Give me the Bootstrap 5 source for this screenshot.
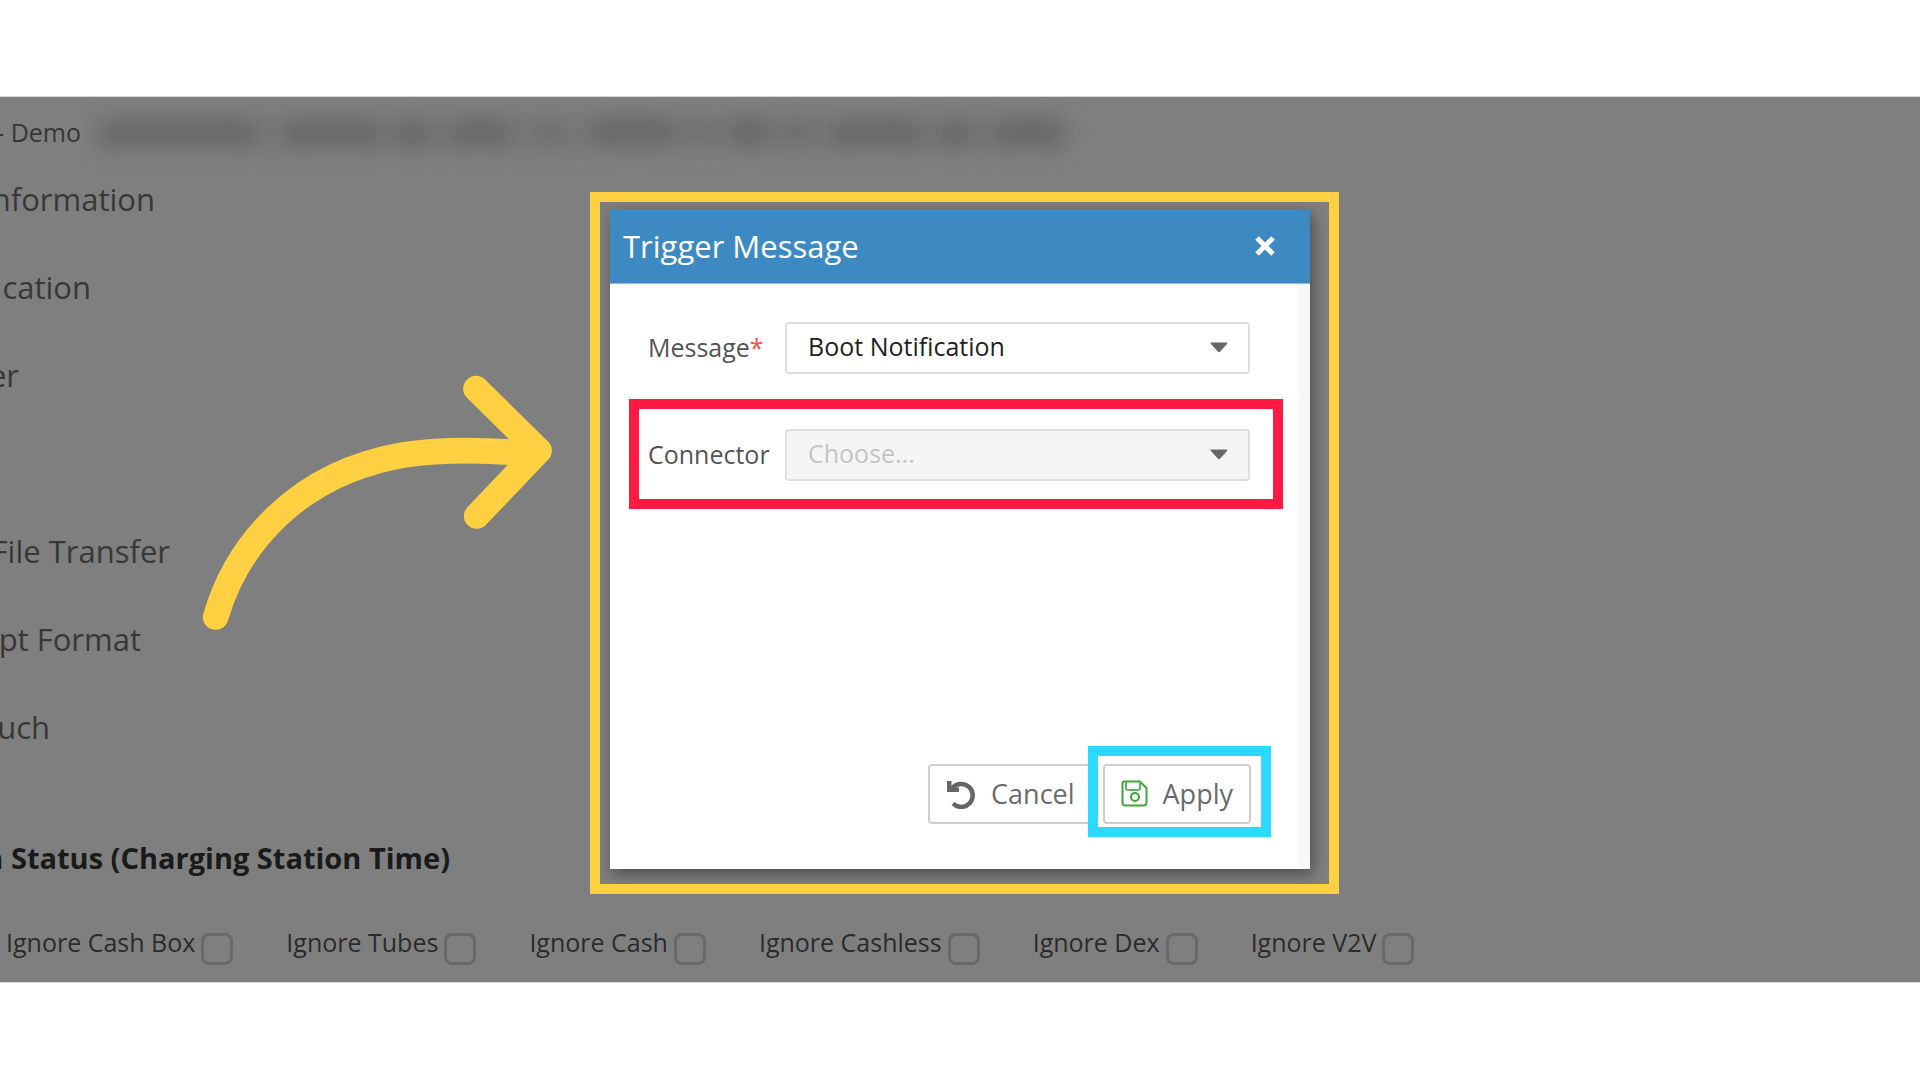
<!DOCTYPE html>
<html lang="en">
<head>
<meta charset="utf-8">
<meta name="viewport" content="width=device-width, initial-scale=1">
<title>Trigger Message</title>
<link href="https://cdn.jsdelivr.net/npm/bootstrap@5.3.0/dist/css/bootstrap.min.css" rel="stylesheet">
<style>
  body { font-family: "Open Sans", "Noto Sans", sans-serif; font-size: 25px; background: #fff; color: #333; }
  .stage { margin: 97px 0; background: #7f7f7f; box-shadow: 0 0 0 1px #d4d4d4; padding-bottom: 17px; }
  .crumb { height: 58px; padding-top: 12px; line-height: 46px; color: #363636; }
  .clip-end { display: flex; justify-content: flex-end; white-space: nowrap; overflow: hidden; }
  .section-link { height: 88px; line-height: 88px; font-size: 31px; color: #383838; }
  .w-demo { width: 81px; } .w-info { width: 155px; } .w-cat { width: 91px; } .w-er { width: 19px; }
  .w-file { width: 170px; } .w-fmt { width: 141px; } .w-uch { width: 50px; } .w-status { width: 450px; }
  .status-title { margin: 0; padding-top: 67px; font-size: 29px; line-height: 40px; font-weight: 700; color: #1a1a1a; }
  .checks { margin-top: 46px; padding-left: 6px; gap: 53px; line-height: 36px; color: #2b2b2b; }
  .checks .form-check-input { width: 32px; height: 32px; margin: 9px 0 0 6px; border: 3px solid #696969; border-radius: 8px; background-color: transparent; }
  .redacted { left: 84px; top: 0; }
  .arrow { left: 190px; top: 263px; }
  .overlay { inset: 0 0 2px; }
  .dialog { width: 700px; background: #fff; box-shadow: 3px 5px 14px rgba(0,0,0,.4); }
  .dialog-head { height: 75px; padding: 0 33px 0 13px; background: #3d8ac2; border-bottom: 1px solid #8db9dc; color: #fff; }
  .dialog-title { font-size: 31px; line-height: 40px; margin: 0; font-weight: 400; }
  .close-x { border: 0; background: none; padding: 0; line-height: 0; }
  .dialog-body { min-height: 585px; padding: 38px 48px 45px 38px; border-right: 12px solid #f8f8f8; }
  .field { height: 52px; margin-bottom: 55px; }
  .field label { width: 137px; color: #555; }
  .field .form-select {
    --bs-form-select-bg-img: url("data:image/svg+xml,%3csvg xmlns='http://www.w3.org/2000/svg' viewBox='0 0 18 11'%3e%3cpath d='M1 .5h16q.8.8 0 1.600l-7 7.600q-1 .9-2 0l-7-7.600Q.2 1.300 1 .5' fill='%23666'/%3e%3c/svg%3e");
    height: 52px; padding: 0 50px 3px 21px; font-size: 25px; line-height: 45px; color: #222;
    border: 2px solid #dedede; border-radius: 4px; background-size: 18px 11px; background-position: right 20px top 18px;
  }
  .field .form-select:disabled { background-color: #f5f5f5; color: #c4c4c4; opacity: 1; }
  .star { color: #ff4a4a; }
  .actions { gap: 10px; margin-right: -1px; }
  .tool { height: 60px; padding: 0 16px; gap: 15px; border: 2px solid #cfcfcf; border-radius: 4px; background: #fff; font-size: 27px; line-height: 36px; color: #6b6b6b; }
  .tool:hover { background: #f5f5f5; }
  .hl { position: absolute; border: 10px solid; pointer-events: none; }
  .hl-dialog { inset: -17px -29px -25px -20px; border-color: #ffd142; }
  .hl-field { inset: -30px -33px -28px -19px; border-color: #ff1a43; }
  .hl-apply { inset: -20px -22px -15px -17px; border-color: #2ddaff; }
</style>
</head>
<body>
<main class="stage position-relative">
  <div class="crumb clip-end w-demo">- Demo</div>
  <svg class="redacted position-absolute" width="1010" height="80" aria-hidden="true">
    <defs><filter id="soft" x="-10%" y="-100%" width="120%" height="300%"><feGaussianBlur stdDeviation="11"/></filter></defs>
    <g filter="url(#soft)" fill="#666">
      <rect x="12" y="20" width="970" height="32" opacity=".35"/>
      <rect x="16" y="24" width="155" height="25"/><rect x="201" y="24" width="95" height="25"/>
      <rect x="311" y="24" width="35" height="25"/><rect x="366" y="24" width="60" height="25"/>
      <rect x="455" y="26" width="20" height="20"/><rect x="508" y="22" width="83" height="25"/>
      <rect x="606" y="26" width="20" height="14"/><rect x="646" y="22" width="38" height="26"/>
      <rect x="700" y="24" width="24" height="20"/><rect x="746" y="24" width="90" height="25"/>
      <rect x="853" y="24" width="36" height="25"/><rect x="909" y="23" width="72" height="26"/>
    </g>
  </svg>

  <div class="section-link clip-end w-info">nformation</div>
  <div class="section-link clip-end w-cat">cation</div>
  <div class="section-link clip-end w-er">er</div>
  <div class="section-link"></div>
  <div class="section-link clip-end w-file">File Transfer</div>
  <div class="section-link clip-end w-fmt">pt Format</div>
  <div class="section-link clip-end w-uch">uch</div>

  <h2 class="status-title clip-end w-status">n Status (Charging Station Time)</h2>
  <div class="checks d-flex">
    <div class="d-flex"><label for="c1">Ignore Cash Box</label><input class="form-check-input" type="checkbox" id="c1"></div>
    <div class="d-flex"><label for="c2">Ignore Tubes</label><input class="form-check-input" type="checkbox" id="c2"></div>
    <div class="d-flex"><label for="c3">Ignore Cash</label><input class="form-check-input" type="checkbox" id="c3"></div>
    <div class="d-flex"><label for="c4">Ignore Cashless</label><input class="form-check-input" type="checkbox" id="c4"></div>
    <div class="d-flex"><label for="c5">Ignore Dex</label><input class="form-check-input" type="checkbox" id="c5"></div>
    <div class="d-flex"><label for="c6">Ignore V2V</label><input class="form-check-input" type="checkbox" id="c6"></div>
  </div>

  <div class="overlay position-absolute d-flex align-items-center justify-content-center">
    <section class="dialog position-relative" role="dialog" aria-labelledby="dlg-title">
      <header class="dialog-head d-flex align-items-center justify-content-between">
        <h1 class="dialog-title" id="dlg-title">Trigger Message</h1>
        <button class="close-x" type="button" aria-label="Close">
          <svg width="24" height="24" viewBox="0 0 24 24"><path d="M4 4l16 16M20 4L4 20" stroke="#fff" stroke-width="5"/></svg>
        </button>
      </header>
      <form class="dialog-body d-flex flex-column">
        <div class="field d-flex align-items-center position-relative">
          <label class="flex-shrink-0" for="msg">Message<span class="star">*</span></label>
          <select class="form-select" id="msg"><option>Boot Notification</option></select>
        </div>
        <div class="field d-flex align-items-center position-relative">
          <label class="flex-shrink-0" for="conn">Connector</label>
          <select class="form-select" id="conn" disabled><option>Choose...</option></select>
          <span class="hl hl-field"></span>
        </div>
        <div class="actions d-flex justify-content-end mt-auto">
          <button class="tool d-flex align-items-center" type="button">
            <svg width="30" height="30" viewBox="0 0 30 30"><path d="M6 9.500A11.500 11.500 0 1 1 7 24.500" fill="none" stroke="#666" stroke-width="4.500"/><path d="M1 2h4.500v6.500H13v4.500H1z" fill="#666"/></svg>
            Cancel
          </button>
          <button class="tool d-flex align-items-center position-relative" type="button">
            <svg width="27" height="27" viewBox="0 0 27 27" fill="none" stroke="#3fa535" stroke-width="2"><path d="M3 1.500h16l6.500 6.500v14.500a3 3 0 0 1-3 3h-18a3 3 0 0 1-3-3V3a1.500 1.500 0 0 1 1.500-1.500z"/><path d="M5 2v6a2 2 0 0 0 2 2h10a2 2 0 0 0 2-2V2" stroke="#65ad62"/><circle cx="14" cy="17" r="4"/></svg>
            Apply
            <span class="hl hl-apply"></span>
          </button>
        </div>
      </form>
      <span class="hl hl-dialog"></span>
    </section>
  </div>

  <svg class="arrow position-absolute" width="400" height="290" viewBox="0 0 1200 870" fill="none" stroke="#ffd142" stroke-width="77" stroke-linecap="round" stroke-linejoin="round" aria-hidden="true">
    <path d="M77 771C140 555 320 340 640 285C760 268 870 268 1000 280"/>
    <path d="M858 86L1047 272L860 468"/>
  </svg>
</main>
<script src="https://cdn.jsdelivr.net/npm/bootstrap@5.3.0/dist/js/bootstrap.bundle.min.js"></script>
</body>
</html>
